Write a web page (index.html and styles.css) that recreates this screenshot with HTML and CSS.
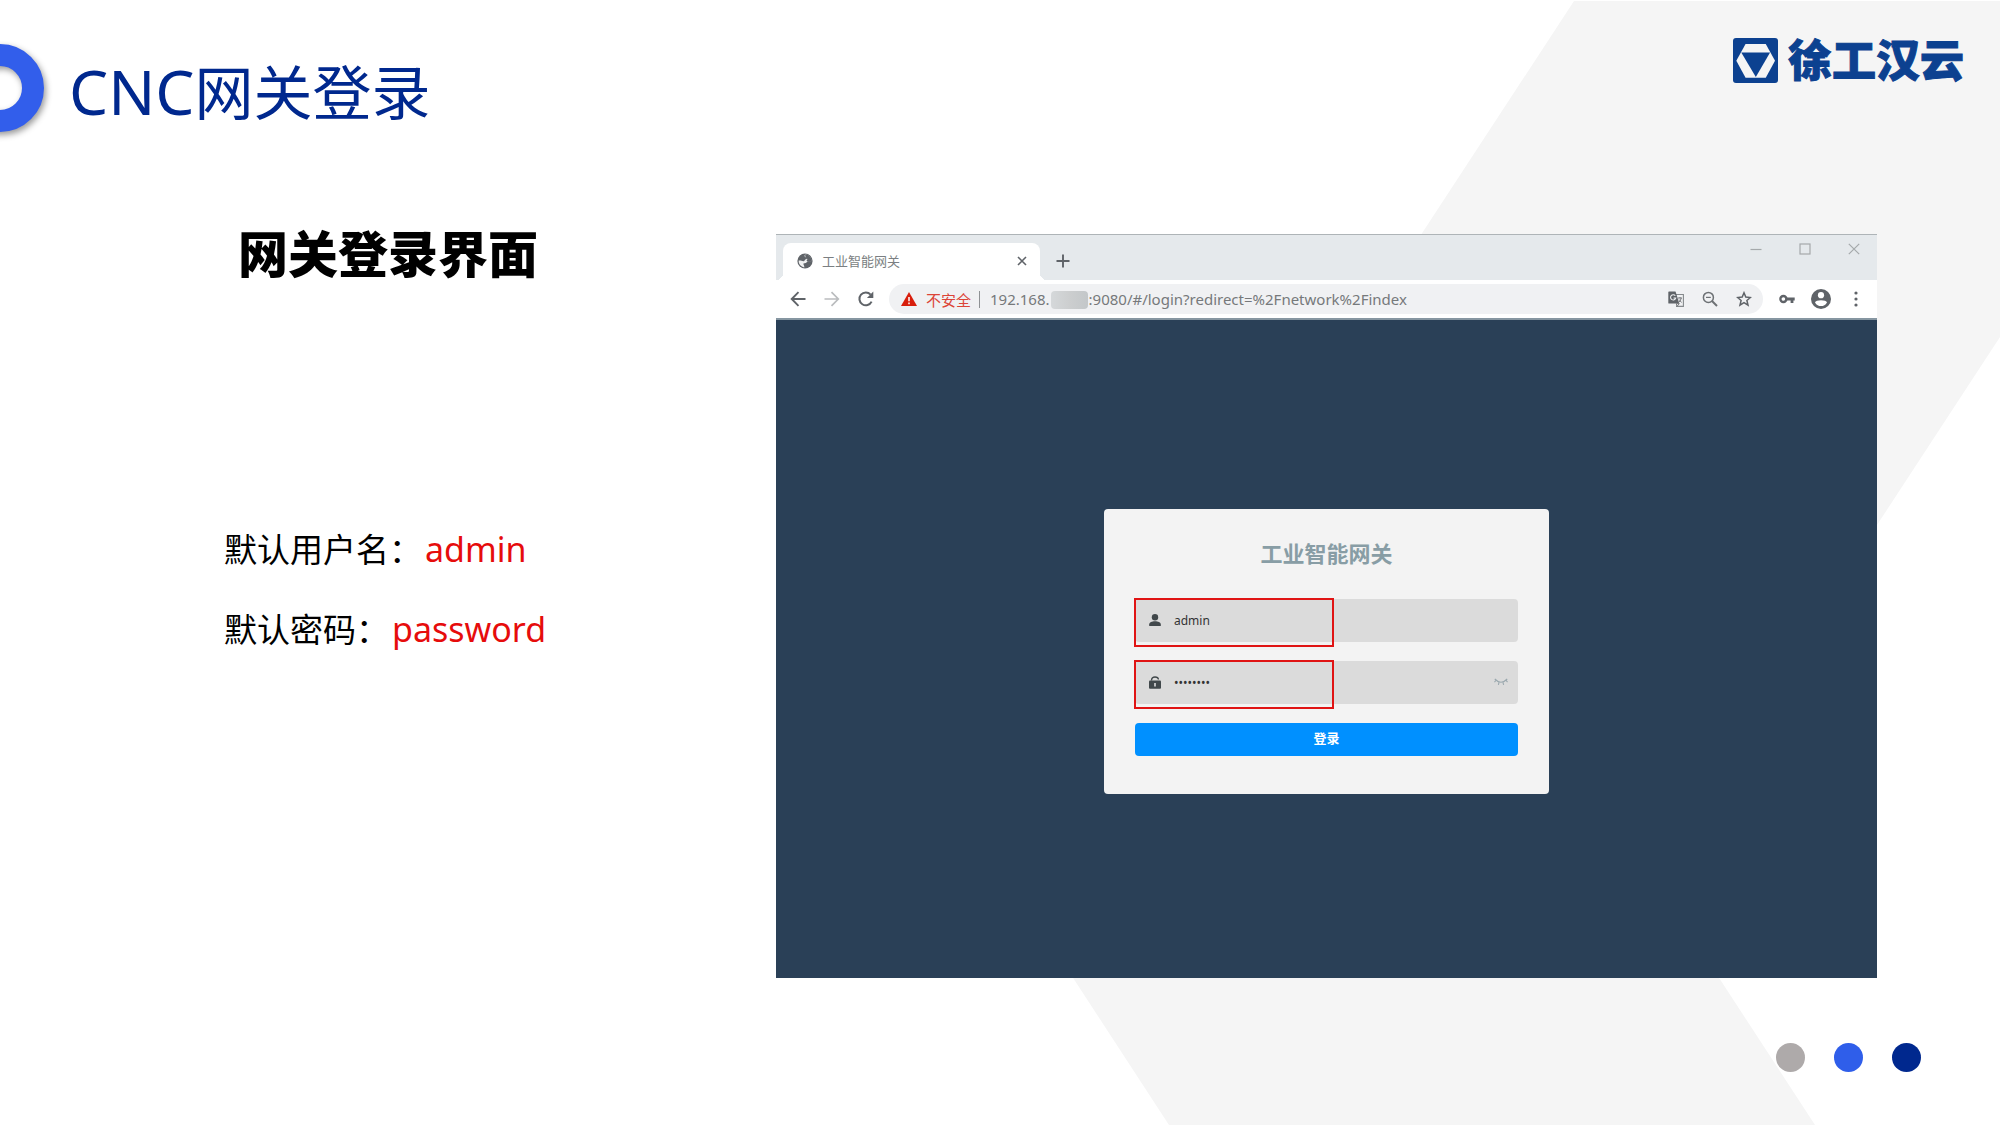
FILE: index.html
```html
<!DOCTYPE html>
<html lang="zh-CN">
<head>
  <meta charset="UTF-8">
  <meta name="viewport" content="width=device-width, initial-scale=1.0">
  <title>CNC网关登录</title>
  <link rel="stylesheet" href="styles.css">
</head>
<body>

  <!-- Background chevron -->
  <svg class="backdrop" viewBox="0 0 2000 1125" preserveAspectRatio="none" aria-hidden="true">
    <polygon points="1574,1 2000,1 2000,337 1650,872 1815,1125 1169,1125 1004,872" fill="#f5f5f5"/>
  </svg>

  <header class="header">
    <div class="ring"></div>
    <h1><span class="latin">CNC</span>网关登录</h1>
    <div class="logo">
      <svg viewBox="0 0 136 136" width="45" height="45" aria-hidden="true">
        <rect width="136" height="136" rx="9" fill="#0c4190"/>
        <path d="M38 18H99L127 69L99 120H38L10 69Z" fill="#f5f5f5"/>
        <path d="M25 44H112L69 118Z" fill="#0c4190"/>
      </svg>
      <span>徐工汉云</span>
    </div>
  </header>

  <main class="main">
    <section class="notes">
      <h2>网关登录界面</h2>
      <p>默认用户名：<span class="value">admin</span></p>
      <p>默认密码：<span class="value">password</span></p>
    </section>

    <section class="browser">
      <!-- Tab strip -->
      <div class="tab-strip">
        <div class="tab">
          <svg viewBox="0 0 16 16" width="16" height="16" aria-hidden="true">
            <circle cx="8" cy="8" r="7.6" fill="#5f6368"/>
            <path d="M8.2 1.6C6.7 3 7.6 4.2 9.3 4.4C10.6 4.6 10 6 8.8 6.2C7.5 6.5 7.9 8 6.6 8.2C5 8.3 3.6 7.3 1.7 7.6C1.3 11 4 14 7.3 14.4C7.6 12.7 6.2 12 6.4 10.5C8 10.4 9.9 10 10.4 8.6C11.5 8 13 8.6 14.3 8.3C14.6 4.6 11.6 1.6 8.2 1.6Z" fill="#fff" opacity=".9"/>
            <path d="M8.5 1.2C12 1.6 14.7 4.6 14.5 8.2C13.4 9.6 12 8 10.8 8.6C9.4 7.8 9.2 6.9 10.6 6.2C9.4 4.9 7.5 3.4 8.5 1.2Z" fill="#5f6368"/>
          </svg>
          <span class="tab-title">工业智能网关</span>
          <button type="button" class="icon-btn" aria-label="关闭标签页">
            <svg viewBox="0 0 10 10" width="10" height="10"><path d="M1 1L9 9M9 1L1 9" stroke="#5f6368" stroke-width="1.6"/></svg>
          </button>
        </div>
        <button type="button" class="icon-btn new-tab" aria-label="新标签页">
          <svg viewBox="0 0 14 14" width="14" height="14"><path d="M7 .5V13.5M.5 7H13.5" stroke="#5f6368" stroke-width="1.9"/></svg>
        </button>
        <div class="window-buttons">
          <button type="button" class="icon-btn" aria-label="最小化">
            <svg viewBox="0 0 12 12" width="12" height="12"><path d="M.5 6.5H11.5" stroke="#a5a9ab" stroke-width="1.2"/></svg>
          </button>
          <button type="button" class="icon-btn" aria-label="最大化">
            <svg viewBox="0 0 12 12" width="12" height="12"><rect x="1" y="1" width="10" height="10" fill="none" stroke="#a5a9ab" stroke-width="1.2"/></svg>
          </button>
          <button type="button" class="icon-btn" aria-label="关闭">
            <svg viewBox="0 0 12 12" width="12" height="12"><path d="M.8 .8L11.2 11.2M11.2 .8L.8 11.2" stroke="#a5a9ab" stroke-width="1.2"/></svg>
          </button>
        </div>
      </div>

      <!-- Toolbar -->
      <div class="toolbar">
        <div class="nav-buttons">
          <button type="button" class="icon-btn" aria-label="后退">
            <svg viewBox="0 0 16 16" width="16" height="16"><path d="M15.5 8H2M8.5 1.2L1.7 8L8.5 14.8" fill="none" stroke="#5f6368" stroke-width="1.9"/></svg>
          </button>
          <button type="button" class="icon-btn" aria-label="前进">
            <svg viewBox="0 0 16 16" width="16" height="16"><path d="M.5 8H14M7.5 1.2L14.3 8L7.5 14.8" fill="none" stroke="#babcbe" stroke-width="1.7"/></svg>
          </button>
          <button type="button" class="icon-btn" aria-label="重新加载">
            <svg viewBox="0 0 16 16" width="16" height="16"><path d="M13.6 10.6A6.4 6.4 0 1 1 12.6 3.6" fill="none" stroke="#5f6368" stroke-width="2"/><path d="M15.3 .6V7H8.9Z" fill="#5f6368"/></svg>
          </button>
        </div>
        <div class="address-bar">
          <svg viewBox="0 0 16 14" width="16" height="14" aria-hidden="true"><path d="M8 0L16 14H0Z" fill="#d81e0c"/><path d="M8 5V9.3M8 10.5V12.2" stroke="#fff" stroke-width="1.5"/></svg>
          <span class="insecure">不安全</span>
          <span class="divider"></span>
          <div class="url">
            <input type="text" aria-label="地址" value="192.168.          :9080/#/login?redirect=%2Fnetwork%2Findex">
            <span class="mosaic"></span>
          </div>
          <button type="button" class="icon-btn" aria-label="翻译">
            <svg viewBox="0 0 16 16" width="16" height="16"><path d="M7 3.5H15.4V15.4H8" fill="none" stroke="#85898c" stroke-width="1.1"/><path d="M1 .4H7.5L11.3 12.6H1Q.3 12.6 .3 12V1Q.3 .4 1 .4Z" fill="#5f6368"/><path d="M7.3 4.8A2.6 2.6 0 1 0 7.7 7H5.5" fill="none" stroke="#f0f1f3" stroke-width="1.1"/><path d="M9.8 7H14M12 6V7M13.2 7Q12.8 10 10.8 11.3M11.2 8.6L13.5 11.5M8.3 12.6H11.3L9 15.4Z" fill="none" stroke="#77797c"/></svg>
          </button>
          <button type="button" class="icon-btn" aria-label="缩放">
            <svg viewBox="0 0 16 16" width="16" height="16"><circle cx="6.4" cy="6.4" r="5" fill="none" stroke="#6d7174" stroke-width="1.5"/><path d="M10 10L15 15" stroke="#6d7174" stroke-width="2"/><path d="M4 6.4H8.8" stroke="#6d7174" stroke-width="1.2"/></svg>
          </button>
          <button type="button" class="icon-btn" aria-label="收藏">
            <svg viewBox="0 0 16 16" width="16" height="16"><path d="M8 1.8L9.8 6.1L14.4 6.5L10.9 9.5L12 14.1L8 11.6L4 14.1L5.1 9.5L1.6 6.5L6.2 6.1Z" fill="none" stroke="#5f6368" stroke-width="1.5"/></svg>
          </button>
        </div>
        <div class="menu-buttons">
          <button type="button" class="icon-btn" aria-label="密码">
            <svg viewBox="0 0 16 10" width="16" height="10"><circle cx="4.4" cy="5" r="3" fill="none" stroke="#5f6368" stroke-width="2.4"/><path d="M8 3.6H15.7V6.4H14.4V9H11.6V6.4H8Z" fill="#5f6368"/></svg>
          </button>
          <button type="button" class="icon-btn" aria-label="用户">
            <svg viewBox="0 0 20 20" width="20" height="20"><circle cx="10" cy="10" r="10" fill="#5f6368"/><circle cx="10" cy="6.2" r="3.1" fill="#fff"/><path d="M4 13.4C4.6 10.4 15.4 10.4 16 13.4C14.5 16 12.4 17 10 17S5.5 16 4 13.4Z" fill="#fff"/></svg>
          </button>
          <button type="button" class="icon-btn" aria-label="菜单">
            <svg viewBox="0 0 4 16" width="4" height="16"><g fill="#5f6368"><circle cx="2" cy="2" r="1.6"/><circle cx="2" cy="8" r="1.6"/><circle cx="2" cy="14" r="1.6"/></g></svg>
          </button>
        </div>
      </div>

      <!-- Login page -->
      <div class="page">
        <form class="login">
          <h3>工业智能网关</h3>
          <div class="field">
            <label for="username" aria-label="用户名">
              <svg viewBox="0 0 12 12" width="12" height="12"><circle cx="6" cy="3.2" r="3.2" fill="#41484b"/><path d="M.2 12V10.5C.2 8.3 3 7.2 6 7.2S11.8 8.3 11.8 10.5V12Z" fill="#41484b"/></svg>
            </label>
            <input type="text" id="username" value="admin">
            <span class="highlight"></span>
          </div>
          <div class="field">
            <label for="password" aria-label="密码">
              <svg viewBox="0 0 12 13" width="12" height="13"><path d="M2.5 4.5V4Q2.8 1 6 1T9.5 3.5" fill="none" stroke="#41484b" stroke-width="1.3"/><rect y="4.5" width="12" height="8.3" rx="1" fill="#41484b"/><path d="M6 7V10.5" stroke="#dbdbdb" stroke-width="1.6"/></svg>
            </label>
            <input type="password" id="password" value="password">
            <button type="button" class="icon-btn" aria-label="显示密码">
              <svg viewBox="0 0 14 8" width="14" height="8"><path d="M.8 1Q7 7.5 13.2 1M1.8 2.5L.5 4.2M5 4.3L4.4 6.8M9 4.3L9.6 6.8M12.2 2.5L13.5 4.2" fill="none" stroke="#9aa8ae" stroke-width="1.1"/></svg>
            </button>
            <span class="highlight"></span>
          </div>
          <button type="submit" class="submit">登录</button>
        </form>
      </div>
    </section>
  </main>

  <footer class="dots">
    <span class="dot grey"></span>
    <span class="dot blue"></span>
    <span class="dot navy"></span>
  </footer>

</body>
</html>
```

FILE: styles.css
```css
* {
  box-sizing: border-box;
}

body {
  margin: 0;
  min-height: 100vh;
  display: flex;
  flex-direction: column;
  position: relative;
  overflow-x: hidden;
  background-color: #fff;
  color: #000;
  font-family: "Noto Sans", "Noto Sans CJK SC", sans-serif;
}

h1, h2, h3, p {
  margin: 0;
}

button, input {
  font-family: inherit;
}

svg {
  display: block;
}

.backdrop {
  position: absolute;
  inset: 0;
  width: 100%;
  height: 100%;
  z-index: -1;
}

/* Header */
.header {
  display: flex;
  align-items: flex-start;
  padding: 38px 36px 0 0;
}

.ring {
  width: 88px;
  height: 88px;
  margin: 6px 25px 0 -44px;
  border: 22px solid #325eeb;
  border-radius: 50%;
  filter: drop-shadow(2px 3px 3px rgba(0, 0, 0, 0.4));
}

h1 {
  padding-top: 9px;
  font-size: 59px;
  line-height: 88px;
  font-weight: 400;
  color: #00288e;
}

.latin {
  font-size: 62px;
}

.logo {
  display: flex;
  align-items: center;
  gap: 10px;
  margin-left: auto;
  font-size: 44px;
  line-height: 45px;
  font-weight: 900;
  color: #0c4190;
  -webkit-text-stroke: 1px #0c4190;
}

/* Main area */
.main {
  flex: 1;
  display: grid;
  grid-template-columns: 776px 1fr;
  padding: 98px 123px 0 0;
}

.notes {
  padding-left: 224px;
  font-size: 33px;
  line-height: 80px;
}

h2 {
  margin: 0 0 236px 14px;
  font-size: 50px;
  line-height: 40px;
  font-weight: 900;
}

.value {
  margin-left: 3px;
  font-size: 34px;
  line-height: 40px;
  color: #e60c0c;
}

/* Browser window */
.browser {
  display: flex;
  flex-direction: column;
  background-color: #fff;
  border-top: 1px solid #aeb4b7;
}

.icon-btn {
  padding: 0;
  border: 0;
  background: none;
  cursor: pointer;
}

.tab-strip {
  display: flex;
  height: 45px;
  padding: 8px 17px 0 7px;
  background-color: #e5e9ec;
}

.tab {
  display: flex;
  align-items: center;
  width: 257px;
  padding: 0 13px 2px 14px;
  gap: 9px;
  position: relative;
  background-color: #fff;
  border-radius: 8px 8px 0 0;
}

/* Curved feet of the active tab */
.tab::before,
.tab::after {
  content: "";
  position: absolute;
  bottom: 0;
  width: 7px;
  height: 7px;
}

.tab::before {
  right: 100%;
  background: radial-gradient(circle at 0 0, transparent 7px, #fff 7px);
}

.tab::after {
  left: 100%;
  background: radial-gradient(circle at 100% 0, transparent 7px, #fff 7px);
}

.tab-title {
  flex: 1;
  font-size: 13px;
  color: #7b7f82;
}

.new-tab {
  margin-left: 16px;
  padding-bottom: 2px;
}

.window-buttons {
  display: flex;
  align-items: flex-start;
  gap: 37px;
  margin-left: auto;
}

.toolbar {
  display: flex;
  align-items: center;
  height: 40px;
  padding: 0 19px 0 14px;
  border-bottom: 2px solid #8696a1;
}

.nav-buttons {
  display: flex;
  gap: 18px;
  margin-right: 15px;
}

.address-bar {
  flex: 1;
  display: flex;
  align-items: center;
  gap: 18px;
  height: 30px;
  padding: 0 11px 0 12px;
  border-radius: 15px;
  background-color: #f0f1f3;
}

.insecure {
  margin: 0 -10px 0 -9px;
  font-size: 15px;
  color: #dc4437;
}

.divider {
  width: 1px;
  height: 17px;
  margin-right: -8px;
  background-color: #8e9194;
}

.url {
  flex: 1;
  position: relative;
}

.url input {
  display: block;
  width: 100%;
  padding: 0;
  border: 0;
  background: none;
  font-size: 15px;
  color: #76797b;
}

.mosaic {
  position: absolute;
  top: 2px;
  left: 61px;
  width: 37px;
  height: 18px;
  border-radius: 4px;
  background: linear-gradient(90deg, #d5d8da, #cccecf 50%, #c3c7c9);
}

.menu-buttons {
  display: flex;
  align-items: center;
  gap: 16px;
  margin-left: 16px;
}

.menu-buttons .icon-btn:last-child {
  margin-left: 7px;
}

/* Login page */
.page {
  flex: 1;
  display: flex;
  align-items: center;
  justify-content: center;
  padding-top: 4px;
  background-color: #2a4057;
}

.login {
  width: 445px;
  padding: 32px 31px 38px;
  border-radius: 4px;
  background-color: #f3f3f3;
}

h3 {
  margin-bottom: 34px;
  font-size: 22px;
  line-height: 24px;
  text-align: center;
  color: #889da5;
}

.field {
  display: flex;
  align-items: center;
  gap: 13px;
  position: relative;
  height: 43px;
  margin-bottom: 19px;
  padding: 0 10px 0 14px;
  border-radius: 4px;
  background-color: #dbdbdb;
}

.field input {
  flex: 1;
  padding: 0;
  border: 0;
  outline: 0;
  background: none;
  font-size: 12px;
  color: #333;
}

.highlight {
  position: absolute;
  top: -1px;
  left: -1px;
  width: 200px;
  height: 49px;
  border: 2px solid #e01414;
  pointer-events: none;
}

.submit {
  display: block;
  width: 100%;
  height: 33px;
  padding: 0 0 3px;
  border: 0;
  border-radius: 4px;
  background-color: #0090ff;
  color: #fff;
  font-size: 13px;
  font-weight: 700;
  cursor: pointer;
}

/* Page dots */
.dots {
  display: flex;
  justify-content: flex-end;
  gap: 29px;
  padding: 65px 79px 53px;
}

.dot {
  width: 29px;
  height: 29px;
  border-radius: 50%;
}

.grey {
  background-color: #aeaaaa;
}

.blue {
  background-color: #2f5eea;
}

.navy {
  background-color: #00288e;
}
```
